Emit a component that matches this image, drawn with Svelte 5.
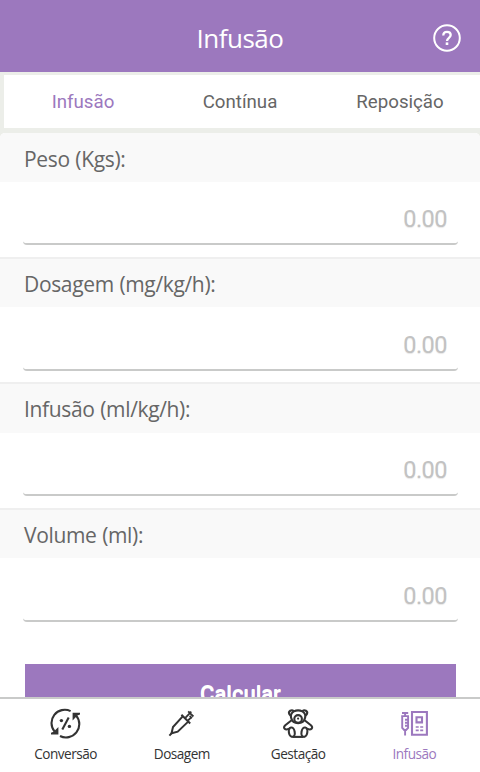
<script lang="ts">
  const tabs = ['Infusão', 'Contínua', 'Reposição'];
  const fields = ['Peso (Kgs):', 'Dosagem (mg/kg/h):', 'Infusão (ml/kg/h):', 'Volume (ml):'];
  const nav = [
    { id: 'conversion', label: 'Conversão' },
    { id: 'dosage', label: 'Dosagem' },
    { id: 'gestation', label: 'Gestação' },
    { id: 'infusion', label: 'Infusão' },
  ];

  let activeTab = $state('Infusão');
  let activeNav = $state('infusion');
</script>

<div class="app">
  <header>
    <h1>Infusão</h1>
    <button class="help" aria-label="Ajuda">
      <svg width="30" height="30" viewBox="0 0 30 30" fill="none" stroke="currentColor">
        <circle cx="15" cy="15" r="12.8" stroke-width="2" />
        <path d="M11.3 12.4c0-2.4 1.5-3.6 3.7-3.6s3.7 1.3 3.7 3.2c0 2.8-3.7 2.8-3.7 6" stroke-width="2.3" />
        <path d="M15 19.4v2.6" stroke-width="2.6" />
      </svg>
    </button>
  </header>

  <div class="tabs">
    {#each tabs as tab}
      <button class="tab" class:active={activeTab === tab} onclick={() => (activeTab = tab)}>{tab}</button>
    {/each}
  </div>

  <main>
    <form>
      {#each fields as field, i}
        <section>
          <label for="field-{i}">{field}</label>
          <div class="field">
            <input id="field-{i}" placeholder="0.00" inputmode="decimal" />
          </div>
        </section>
      {/each}
      <button type="button" class="calc">Calcular</button>
    </form>
  </main>

  <nav>
    {#each nav as item}
      <button class="nav-item" class:active={activeNav === item.id} onclick={() => (activeNav = item.id)}>
        <svg width="32" height="32" viewBox="0 0 32 32" fill="none" stroke="currentColor" stroke-width="2.1">
          {#if item.id === 'conversion'}
            <path d="M21.6 4.1A13.3 13.3 0 0 0 5.6 24.6M11 29A13.3 13.3 0 0 0 27.2 8.6" />
            <path d="M23.6 5.8H31v1.8l-2.6 1-4.8 4.8zM9.4 27.5H2v-1.8l2.6-1 4.8-4.8z" fill="currentColor" stroke="none" />
            <path d="M19.7 10.4l-6.4 12" />
            <circle cx="12.4" cy="13.6" r="1.7" fill="currentColor" stroke="none" />
            <circle cx="20.4" cy="19.4" r="1.7" fill="currentColor" stroke="none" />
          {:else if item.id === 'dosage'}
            <path d="M17.7 9.4L8 20l-1.5 6.3 6.2-1.6 10.5-10.1" stroke-width="2" />
            <path d="M16.4 7.7l8.8 8.8M7.2 25.6l-2.8 3" stroke-width="2" />
            <path d="M20.3 10.8l6-6.1M23 13.5l3.2-3.1M23.2 4.3l5.2 5.2" stroke-width="1.8" />
            <path d="M24.6 8.8l2.4 2.3" stroke-width="1.6" />
          {:else if item.id === 'gestation'}
            <path d="M11.8 4.2C9.6 2 6.1 4.3 7.2 6.9c.3.8.9 1.3 1.6 1.6M20.4 4.2C22.6 2 26.1 4.3 25 6.9c-.3.8-.9 1.3-1.6 1.6" />
            <path d="M11.8 4.4c2.4-1.2 6.2-1.2 8.6 0 2 1.2 3.3 3.8 2.7 6.3-.9 3.5-3.5 5.4-7 5.4s-6.1-1.9-7-5.4c-.6-2.5.7-5.1 2.7-6.3z" />
            <circle cx="16.1" cy="11.9" r="3.8" />
            <circle cx="16.1" cy="11.6" r="1.1" fill="currentColor" stroke="none" />
            <path d="M9.6 13.2l-6.3 5c-3.1 2.9.1 5.2 3.3 3.7l1.6-.7M22.6 13.2l6.3 5c3.1 2.9-.1 5.2-3.3 3.7l-1.6-.7" />
            <ellipse cx="9.8" cy="25.2" rx="2.9" ry="4.7" transform="rotate(-10 9.8 25.2)" />
            <ellipse cx="22.4" cy="25.2" rx="2.9" ry="4.7" transform="rotate(10 22.4 25.2)" />
            <path d="M11 29.9h10.2" />
          {:else}
            <path d="M14 5h14.9v22.7H14z" />
            <path d="M18.5 10.2H24v5.2h-5.5z" />
            <path d="M17.7 20h3M22.2 20h3M17.7 23.3h3M22.2 23.3h3" stroke-width="1.7" />
            <path d="M4 6h6.2M7.1 6v3M3.2 9.1H11M4.2 9.4v11.4l2 2.2h1.9l2-2.2V9.4M7.1 22.6v6M7 12.8h3M7 15.8h3M7 18.8h3" stroke-width="1.9" />
          {/if}
        </svg>
        <span>{item.label}</span>
      </button>
    {/each}
  </nav>
</div>

<style>
  :global(body) {
    margin: 0;
    overflow: hidden;
  }

  .app {
    display: flex;
    flex-direction: column;
    height: 772px;
    background: #fff;
    color: #666;
    font-family: 'Open Sans', 'Noto Sans', sans-serif;
  }

  button {
    margin: 0;
    padding: 0;
    border: 0;
    background: none;
    color: inherit;
    font: inherit;
  }

  header {
    display: grid;
    grid-template-columns: 48px 1fr 48px;
    align-items: center;
    flex: none;
    height: 72px;
    box-sizing: border-box;
    padding-top: 4px;
    background: #9c78be;
    color: #fff;
  }

  h1 {
    grid-column: 2;
    margin: 0;
    font-size: 26px;
    font-weight: 400;
    line-height: 36px;
    letter-spacing: -0.5px;
    text-align: center;
  }

  .help {
    height: 30px;
    padding-right: 18px;
  }

  svg {
    display: block;
  }

  .tabs {
    display: grid;
    grid-template-columns: 158px 156px 1fr;
    flex: none;
    height: 53px;
    border: solid #eceee9;
    border-width: 3px 0 5px 4px;
    font-family: Roboto, sans-serif;
    font-size: 18.7px;
  }

  .tab:last-child {
    padding-left: 2px;
  }

  .active {
    color: #9c78be;
  }

  main {
    flex: 1;
    min-height: 0;
    overflow: hidden;
    background: #eceee9;
  }

  form {
    display: flex;
    flex-direction: column;
    background: #fff;
    border-radius: 5px 5px 0 0;
    overflow: hidden;
  }

  section {
    height: 126px;
  }

  section:first-child {
    height: 124px;
  }

  section:nth-child(2) {
    height: 125px;
  }

  section + section label {
    height: 48px;
    border-top: 2px solid #efefef;
    line-height: 50px;
  }

  section:nth-child(3) label {
    height: 49px;
    line-height: 51px;
  }

  label {
    display: block;
    height: 49px;
    padding-left: 24px;
    background: #f9f9f9;
    font-size: 21px;
    line-height: 52px;
    letter-spacing: -0.35px;
    word-spacing: 0.6px;
  }

  .field {
    padding: 12px 22px 0 23px;
  }

  section:nth-child(2) .field,
  section:nth-child(4) .field {
    padding-top: 13px;
  }

  input {
    display: block;
    width: 100%;
    height: 51px;
    box-sizing: border-box;
    padding: 0 11px 0 0;
    border: 0 solid #c9cac9;
    border-bottom-width: 2px;
    border-radius: 4px;
    outline: 0;
    background: none;
    font: 23.5px Roboto, sans-serif;
    letter-spacing: -0.5px;
    text-align: right;
  }

  input::placeholder {
    color: #c2c2c2;
    opacity: 1;
    text-shadow: 0 1px 1px #e8e8e8;
  }

  .calc {
    height: 58px;
    margin: 30px 24px 0 25px;
    background: #9c78be;
    color: #fff;
    font: 500 22px Roboto, sans-serif;
    text-shadow: 0 1px 0 #fff;
  }

  nav {
    display: grid;
    grid-template-columns: repeat(4, 1fr);
    flex: none;
    height: 73px;
    padding: 0 8px 0 7px;
    border-top: 2px solid #c9cac9;
    background: #fff;
    color: #333;
  }

  .nav-item {
    display: flex;
    flex-direction: column;
    align-items: center;
    padding-top: 8px;
    font-size: 13.6px;
    line-height: 20px;
    letter-spacing: -0.5px;
  }

  .nav-item span {
    margin-top: 5px;
    padding-left: 1px;
  }

  .nav-item.active {
    color: #9c78be;
  }
</style>
